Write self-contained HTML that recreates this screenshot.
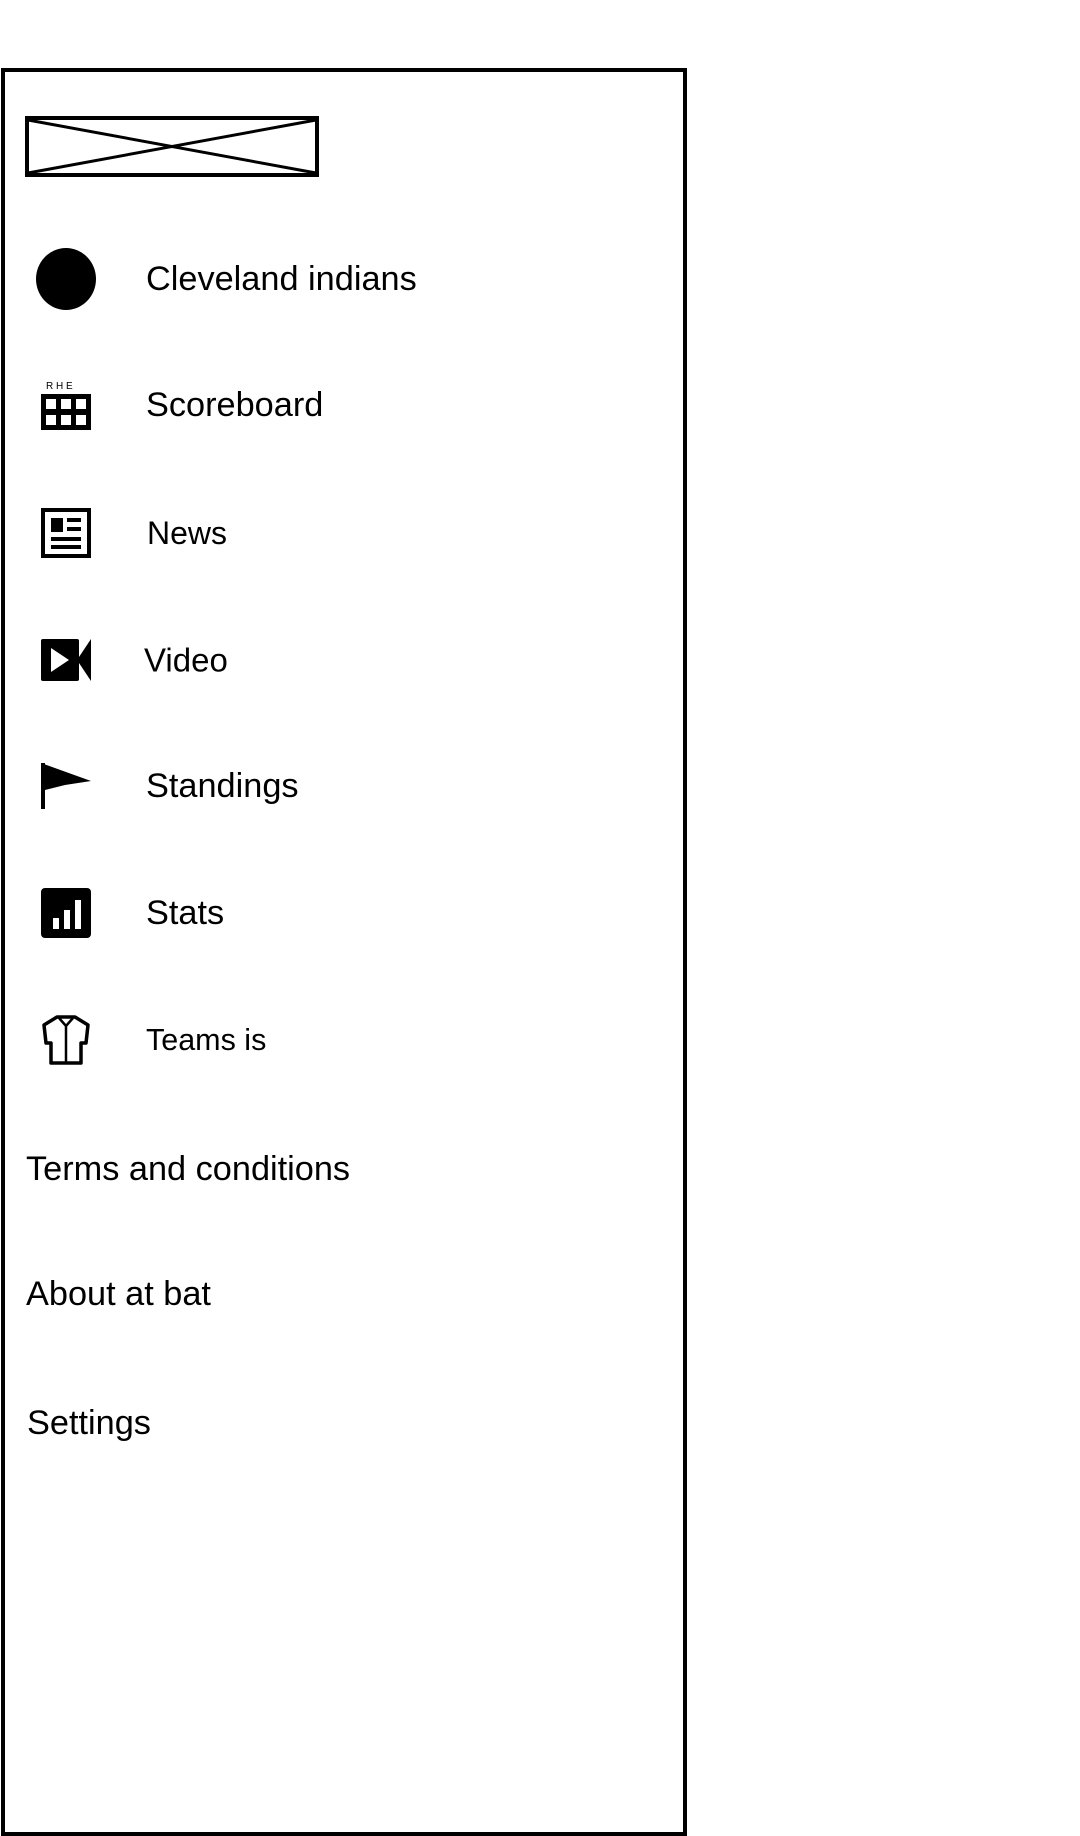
<!DOCTYPE html>
<html><head><meta charset="utf-8"><style>
body{margin:0;width:1080px;height:1800px;background:#fff;position:relative;overflow:hidden;font-family:"Liberation Sans",sans-serif;color:#000}
.panel{position:absolute;left:1px;top:68px;width:678px;height:1760px;border:4px solid #000}
.t{position:absolute;font-size:34.3px;line-height:1;transform:translateY(-50%);white-space:nowrap}
.i{position:absolute;left:41px;width:50px;height:50px;transform:translateY(-50%)}
</style></head><body>
<div class="panel"></div>
<svg style="position:absolute;left:25px;top:116px" width="294" height="61"><rect x="2" y="2" width="290" height="57" fill="none" stroke="#000" stroke-width="4"/><path d="M3 4L291 57M3 57L291 4" stroke="#000" stroke-width="3"/></svg>
<svg class="i" style="top:279px;left:34px;width:64px;height:64px" viewBox="0 0 64 64"><ellipse cx="32" cy="32" rx="30" ry="31" fill="#000"/></svg>
<div class="t" style="left:146px;top:279px">Cleveland indians</div>
<svg class="i" style="top:405px" viewBox="0 0 50 50"><text x="5" y="9" font-size="10" font-family="Liberation Sans">R H E</text><rect x="0" y="14" width="50" height="36" fill="#000"/><g fill="#fff"><rect x="5" y="19" width="10" height="10"/><rect x="20" y="19" width="10" height="10"/><rect x="35" y="19" width="10" height="10"/><rect x="5" y="35" width="10" height="10"/><rect x="20" y="35" width="10" height="10"/><rect x="35" y="35" width="10" height="10"/></g></svg>
<div class="t" style="left:146px;top:405px">Scoreboard</div>
<svg class="i" style="top:533px" viewBox="0 0 50 50"><rect x="2" y="2" width="46" height="46" fill="none" stroke="#000" stroke-width="4"/><rect x="10" y="10" width="12" height="14" fill="#000"/><rect x="26" y="10" width="14" height="4" fill="#000"/><rect x="26" y="19" width="14" height="4" fill="#000"/><rect x="10" y="29" width="30" height="4" fill="#000"/><rect x="10" y="37" width="30" height="4" fill="#000"/></svg>
<div class="t" style="left:147px;top:533px;font-size:32px">News</div>
<svg class="i" style="top:660px" viewBox="0 0 50 50"><rect x="0" y="4" width="38" height="42" rx="2" fill="#000"/><path d="M36 25L50 4V46Z" fill="#000"/><path d="M10 13L28 25L10 37Z" fill="#fff"/></svg>
<div class="t" style="left:144px;top:660px;font-size:33px">Video</div>
<svg class="i" style="top:786px" viewBox="0 0 50 50"><rect x="0" y="2" width="4" height="46" fill="#000"/><path d="M0 2L50 20L24 24L0 30Z" fill="#000"/></svg>
<div class="t" style="left:146px;top:786px">Standings</div>
<svg class="i" style="top:913px" viewBox="0 0 50 50"><rect x="0" y="0" width="50" height="50" rx="4" fill="#000"/><g fill="#fff"><rect x="12" y="30" width="6" height="11"/><rect x="23" y="22" width="6" height="19"/><rect x="34" y="12" width="6" height="29"/></g></svg>
<div class="t" style="left:146px;top:913px">Stats</div>
<svg class="i" style="top:1040px" viewBox="0 0 50 50"><path d="M16 2L34 2L47 10L45 28L40 28L40 48L10 48L10 28L5 28L3 10Z" fill="none" stroke="#000" stroke-width="3.5" stroke-linejoin="round"/><path d="M18 3L25 11L32 3M25 11V48" fill="none" stroke="#000" stroke-width="2.5"/></svg>
<div class="t" style="left:146px;top:1040px;font-size:30.5px">Teams is</div>
<div class="t" style="left:26px;top:1169px">Terms and conditions</div>
<div class="t" style="left:26px;top:1294px">About at bat</div>
<div class="t" style="left:27px;top:1423px">Settings</div>
</body></html>
